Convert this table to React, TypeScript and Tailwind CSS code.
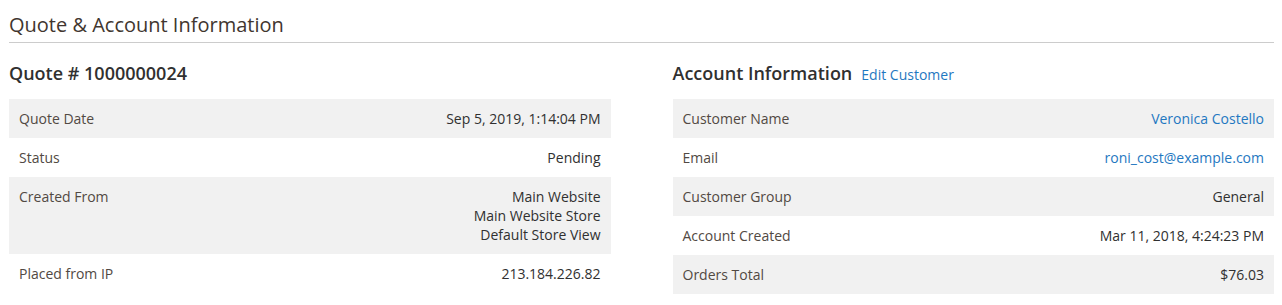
import React from "react";

type Row = { label: string; value: React.ReactNode };

const quoteRows: Row[] = [
  { label: "Quote Date", value: "Sep 5, 2019, 1:14:04 PM" },
  { label: "Status", value: "Pending" },
  {
    label: "Created From",
    value: (
      <>
        Main Website
        <br />
        Main Website Store
        <br />
        Default Store View
      </>
    ),
  },
  { label: "Placed from IP", value: "213.184.226.82" },
];

const accountRows: Row[] = [
  { label: "Customer Name", value: <a className="text-[#1f78c1]">Veronica Costello</a> },
  { label: "Email", value: <a className="text-[#1f78c1]">roni_cost@example.com</a> },
  { label: "Customer Group", value: "General" },
  { label: "Account Created", value: "Mar 11, 2018, 4:24:23 PM" },
  { label: "Orders Total", value: "$76.03" },
];

function Table({ rows }: { rows: Row[] }) {
  return (
    <div className="flex flex-col">
      {rows.map((r, i) => (
        <div
          key={r.label}
          className={`flex justify-between px-[10px] py-[10px] text-[14px] leading-[19px] ${
            i % 2 === 0 ? "bg-[#f1f1f1]" : "bg-white"
          }`}
        >
          <div className="text-[#514943]">{r.label}</div>
          <div className="text-right text-[#303030]">{r.value}</div>
        </div>
      ))}
    </div>
  );
}

export default function App() {
  return (
    <div
      className="bg-white w-[1282px] h-[305px] overflow-hidden pl-[9px] pr-[8px]"
      style={{ fontFamily: '"Open Sans", sans-serif' }}
    >
      <div className="border-b border-[#cccccc] pt-[11px] pb-[3px]">
        <h2 className="text-[20px] leading-[28px] text-[#41362f] font-normal">
          Quote &amp; Account Information
        </h2>
      </div>
      <div className="grid grid-cols-2 gap-[62px] pt-[18px]">
        <div>
          <div className="flex items-baseline h-[38px]">
            <h3 className="text-[18px] leading-[24px] font-semibold text-[#303030]">
              Quote # 1000000024
            </h3>
          </div>
          <Table rows={quoteRows} />
        </div>
        <div>
          <div className="flex items-baseline h-[38px] gap-[9px]">
            <h3 className="text-[18px] leading-[24px] font-semibold text-[#303030]">
              Account Information
            </h3>
            <a className="text-[14px] text-[#1f78c1]">Edit Customer</a>
          </div>
          <Table rows={accountRows} />
        </div>
      </div>
    </div>
  );
}
